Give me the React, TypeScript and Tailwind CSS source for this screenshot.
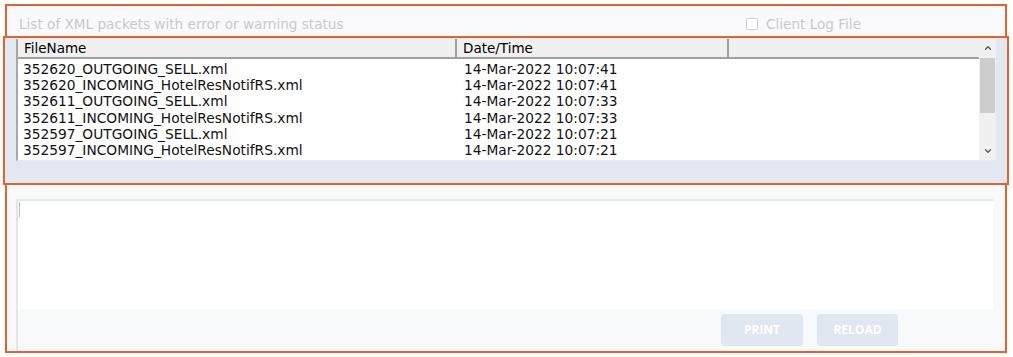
import { ChevronUp, ChevronDown } from "lucide-react";

const rows = [
  ["352620_OUTGOING_SELL.xml", "14-Mar-2022 10:07:41"],
  ["352620_INCOMING_HotelResNotifRS.xml", "14-Mar-2022 10:07:41"],
  ["352611_OUTGOING_SELL.xml", "14-Mar-2022 10:07:33"],
  ["352611_INCOMING_HotelResNotifRS.xml", "14-Mar-2022 10:07:33"],
  ["352597_OUTGOING_SELL.xml", "14-Mar-2022 10:07:21"],
  ["352597_INCOMING_HotelResNotifRS.xml", "14-Mar-2022 10:07:21"],
];

export default function App() {
  return (
    <div className="h-[357px] w-[1013px] overflow-hidden bg-white pl-[5px] pt-[4px] font-[family-name:DejaVu_Sans,sans-serif]">
      <div className="flex h-[349px] w-[1002px] flex-col border-2 border-[#e4632c] bg-[#f8f9fb]">
        {/* title bar */}
        <div className="flex h-[30px] shrink-0 items-end pb-[2px] pl-[12px] text-[13.6px] text-[#c6cad0]">
          <span>List of XML packets with error or warning status</span>
          <label className="ml-auto mr-[144px] flex items-center gap-[8px]">
            <span className="h-[12px] w-[12px] border border-[#d3d6db] bg-white" />
            Client Log File
          </label>
        </div>

        {/* grid section */}
        <div className="relative z-10 -mx-[4px] h-[149px] shrink-0 border-2 border-[#e4632c] bg-[#e2e8f1] pl-[11px] pr-[11px] pt-[1px]">
          <div className="flex h-[122px] border-b border-l-2 border-[#eaeaea] border-l-[#a8a8a8] bg-white">
            <div className="flex min-w-0 flex-1 flex-col">
              <div className="flex h-[20px] shrink-0 border-b-2 border-[#a0a0a0] bg-[#f0f0f0] text-[13.5px] leading-[19px] text-black">
                <div className="w-[439px] border-r-2 border-[#a0a0a0] pl-[6px]">FileName</div>
                <div className="w-[272px] border-r-2 border-[#a0a0a0] pl-[6px]">Date/Time</div>
                <div className="flex-1" />
              </div>
              <div className="pt-[2px] text-[13.75px] leading-[16.2px] text-[#111]">
                {rows.map(([name, date], i) => (
                  <div key={i} className="flex">
                    <div className="w-[441px] pl-[5px]">{name}</div>
                    <div className="pl-[5px]">{date}</div>
                  </div>
                ))}
              </div>
            </div>
            {/* scrollbar */}
            <div className="flex w-[17px] shrink-0 flex-col items-center bg-[#f0f0f0]">
              <ChevronUp className="mt-[4px] h-[10px] w-[10px] text-[#555]" strokeWidth={3} />
              <div className="mt-[5px] h-[55px] w-[15px] bg-[#cdcdcd]" />
              <ChevronDown className="mt-auto mb-[4px] h-[10px] w-[10px] text-[#555]" strokeWidth={3} />
            </div>
          </div>
        </div>

        {/* details + buttons */}
        <div className="flex min-h-0 flex-1 flex-col pt-[14px]">
          <div className="ml-[9px] mr-[12px] flex flex-1 flex-col border-l-2 border-[#e3e5e8]">
            <div className="h-[110px] border-t-2 border-[#e5e7ea] bg-white pl-[1px] pt-[1px]">
              <div className="h-[15px] w-[1px] bg-[#bcbcbc]" />
            </div>
            <div className="flex flex-1 items-center justify-end gap-[14px] pr-[95px]">
              <button className="h-[32px] w-[82px] rounded-[4px] bg-[#dfe7f1] font-[family-name:Open_Sans,sans-serif] text-[12px] font-bold text-white">
                PRINT
              </button>
              <button className="h-[32px] w-[81px] rounded-[4px] bg-[#dfe7f1] font-[family-name:Open_Sans,sans-serif] text-[12px] font-bold text-white">
                RELOAD
              </button>
            </div>
          </div>
        </div>
      </div>
    </div>
  );
}
